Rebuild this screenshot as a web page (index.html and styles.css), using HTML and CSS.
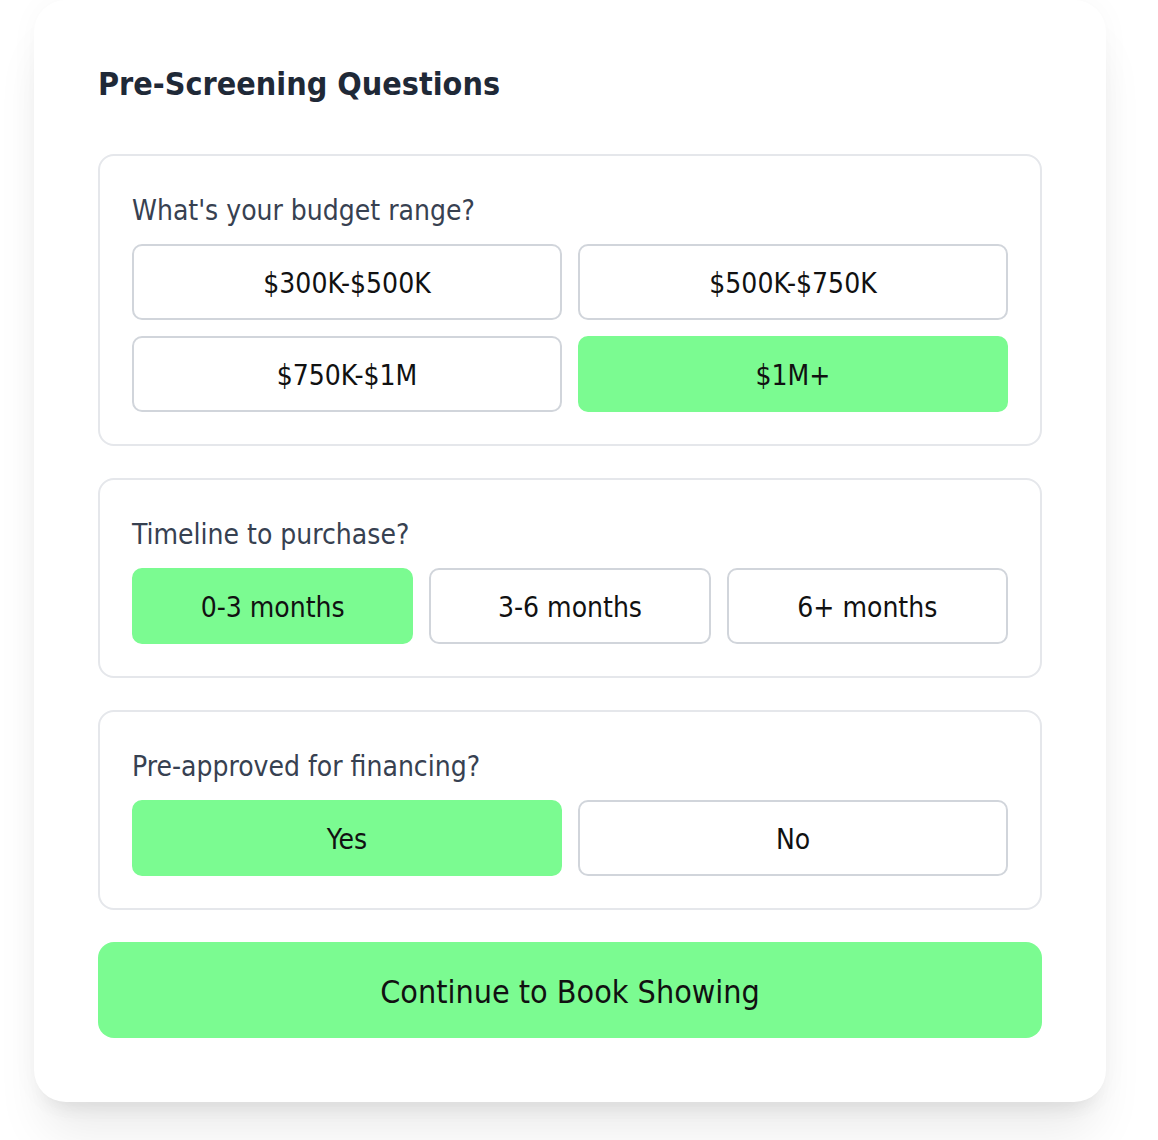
FILE: index.html
```html
<!DOCTYPE html>
<html lang="en">
<head>
   <meta charset="utf-8">
   <title>Pre-Screening Questions</title>
   <link rel="stylesheet" href="styles.css">
</head>
<body>
   <div class="card">
      <h2 class="title">Pre-Screening Questions</h2>

      <div class="group">
         <p class="label">What's your budget range?</p>
         <div class="options two">
            <button class="opt">$300K-$500K</button>
            <button class="opt">$500K-$750K</button>
            <button class="opt">$750K-$1M</button>
            <button class="opt on">$1M+</button>
         </div>
      </div>

      <div class="group">
         <p class="label">Timeline to purchase?</p>
         <div class="options three">
            <button class="opt on">0-3 months</button>
            <button class="opt">3-6 months</button>
            <button class="opt">6+ months</button>
         </div>
      </div>

      <div class="group">
         <p class="label">Pre-approved for financing?</p>
         <div class="options two">
            <button class="opt on">Yes</button>
            <button class="opt">No</button>
         </div>
      </div>

      <button class="continue">Continue to Book Showing</button>
   </div>
</body>
</html>
```

FILE: styles.css
```css
body {
   margin:0;
   padding:0 34px 38px;
   background:#fff;
   font-family:"DejaVu Sans Condensed","DejaVu Sans",sans-serif;
   font-stretch:condensed;
}
.card {
   box-sizing:border-box;
   max-width:1072px;
   background:#fff;
   border-radius:32px;
   padding:64px;
   box-shadow:0 40px 50px -10px rgba(0,0,0,0.08), 0 16px 20px -12px rgba(0,0,0,0.08), 0 0 30px rgba(0,0,0,0.03);
}
.title {
   margin:0 0 50px;
   font-size:32px;
   line-height:40px;
   font-weight:bold;
   color:#1f2937;
}
.group {
   border:2px solid #e5e7eb;
   border-radius:16px;
   padding:32px;
   margin-bottom:32px;
}
.label {
   margin:0 0 13px;
   padding-top:3px;
   font-size:28px;
   line-height:40px;
   color:#374151;
}
.options {
   display:grid;
   gap:16px;
}
.options.two { grid-template-columns:1fr 1fr; }
.options.three { grid-template-columns:1fr 1fr 1fr; }
.opt {
   height:76px;
   border:2px solid #d1d5db;
   border-radius:10px;
   background:#fff;
   font-family:inherit;
   font-stretch:inherit;
   font-size:28px;
   color:#111;
   padding:3px 0 0;
}
.opt.on {
   background:#7bfb91;
   border-color:#7bfb91;
}
.continue {
   display:block;
   width:100%;
   height:96px;
   border:none;
   border-radius:16px;
   background:#7bfb91;
   font-family:inherit;
   font-stretch:inherit;
   font-size:32px;
   color:#111;
   padding:3px 0 0;
}
```
